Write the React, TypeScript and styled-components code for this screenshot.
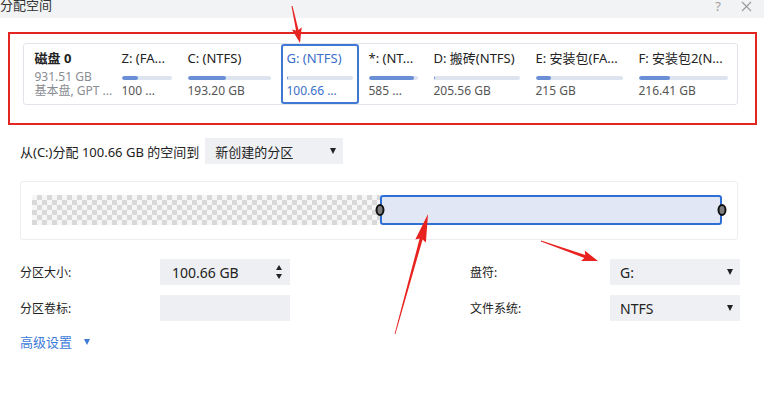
import React from "react";
import styled, { createGlobalStyle } from "styled-components";

const GlobalStyle = createGlobalStyle`
  html, body { margin: 0; padding: 0; background: #fff; }
  body { font-family: "Noto Sans", "Noto Sans CJK SC", sans-serif; color: #222; }
`;

const Window = styled.div`
  position: relative;
  width: 764px;
  height: 400px;
  overflow: hidden;
  background: #fff;
`;

const TitleBar = styled.div`
  height: 18px;
  background: #f2f3f5;
  display: flex;
  align-items: flex-start;
  justify-content: space-between;
`;

const Title = styled.div`
  font-size: 13px;
  line-height: 14px;
  margin-top: -2px;
  color: #333;
`;

const TitleActions = styled.div`
  display: flex;
  align-items: center;
  gap: 20px;
  margin-right: 12px;
  margin-top: 0px;
  color: #a0a0a0;
  font-size: 13px;
  line-height: 13px;
`;

const Highlight = styled.div`
  box-sizing: border-box;
  margin: 14px 0 0 8px;
  width: 749px;
  height: 93px;
  border: 2.5px solid #e3261f;
  padding: 8.5px 0 0 12.5px;
`;

const DiskCard = styled.div`
  box-sizing: border-box;
  width: 715px;
  height: 62px;
  border: 1px solid #e1e4ea;
  border-radius: 3px;
  display: flex;
  gap: 4px;
  padding-left: 11px;
`;

const DiskInfo = styled.div`
  width: 77px;
  padding-top: 6px;
  display: flex;
  flex-direction: column;
`;

const DiskName = styled.div`
  font-size: 13px;
  line-height: 16px;
  font-weight: 700;
  color: #222;
`;

const DiskMeta = styled.div<{ $first?: boolean }>`
  font-size: 12px;
  line-height: 14px;
  color: #8a8d93;
  white-space: nowrap;
  margin-top: ${(p) => (p.$first ? 4 : 0)}px;
`;

const Part = styled.div<{ $sel?: boolean }>`
  box-sizing: border-box;
  height: 100%;
  padding: 4px 4px 0 4px;
  border: 2px solid ${(p) => (p.$sel ? "#3f78d3" : "transparent")};
  border-radius: 3px;
  color: ${(p) => (p.$sel ? "#3a6fc9" : "#222")};
`;

const PartName = styled.div`
  font-size: 13px;
  line-height: 16px;
  white-space: nowrap;
`;

const Bar = styled.div<{ $w: number }>`
  width: ${(p) => p.$w}px;
  height: 4px;
  margin-top: 10px;
  border-radius: 2px;
  background: #dde4f0;
  overflow: hidden;
`;

const Fill = styled.div`
  height: 100%;
  background: #6a8fd6;
  border-radius: 2px;
`;

const PartSize = styled.div<{ $sel?: boolean }>`
  font-size: 12px;
  line-height: 14px;
  margin-top: 4px;
  white-space: nowrap;
  color: ${(p) => (p.$sel ? "#3a6fc9" : "#555")};
`;

const AllocRow = styled.div`
  display: flex;
  align-items: center;
  gap: 6px;
  margin: 13px 0 0 20px;
  font-size: 13px;
  color: #222;
`;

const Select = styled.div<{ $w: number }>`
  box-sizing: border-box;
  width: ${(p) => p.$w}px;
  height: 26px;
  background: #eef0f3;
  display: flex;
  align-items: center;
  justify-content: space-between;
  padding: 0 7px 0 10px;
  font-size: 13px;
  color: #222;
`;

const Caret = styled.span<{ $color?: string }>`
  width: 0;
  height: 0;
  border-left: 3.5px solid transparent;
  border-right: 3.5px solid transparent;
  border-top: 6px solid ${(p) => p.$color || "#222"};
`;

const Panel = styled.div`
  box-sizing: border-box;
  margin: 17px 0 0 20px;
  width: 718px;
  height: 59px;
  border: 1px solid #eceef1;
  border-radius: 3px;
  padding: 13px 15px 0 11px;
`;

const Track = styled.div`
  display: flex;
  height: 30px;
`;

const FreeSpace = styled.div`
  width: 348px;
  background: repeating-conic-gradient(#d9d9d9 0 25%, #f6f6f6 0 50%) 0 0 / 10px 10px;
`;

const SelectedSpace = styled.div`
  position: relative;
  flex: 1;
  box-sizing: border-box;
  border: 2px solid #2e6fd6;
  border-radius: 3px;
  background: #e1e7f4;
`;

const Handle = styled.div<{ $side: "left" | "right" }>`
  position: absolute;
  top: 50%;
  ${(p) => (p.$side === "left" ? "left: -2px;" : "right: -2px;")}
  width: 5px;
  height: 8px;
  border: 2px solid #111;
  border-radius: 50%;
  background: #7f7f7f;
  transform: translate(${(p) => (p.$side === "left" ? "-50%" : "50%")}, -50%);
`;

const Form = styled.div`
  display: grid;
  grid-template-columns: 140px 130px 180px 140px 130px;
  grid-auto-rows: 26px;
  row-gap: 10px;
  align-items: center;
  margin: 19px 0 0 20px;
`;

const Label = styled.div`
  font-size: 12px;
  color: #222;
`;

const Input = styled.div`
  box-sizing: border-box;
  height: 26px;
  background: #edeff2;
  display: flex;
  align-items: center;
  justify-content: space-between;
  padding: 0 8px 0 12px;
  font-size: 14px;
  color: #222;
`;

const Spinner = styled.div`
  display: flex;
  flex-direction: column;
  gap: 4px;
`;

const SpinUp = styled.span`
  width: 0;
  height: 0;
  border-left: 3px solid transparent;
  border-right: 3px solid transparent;
  border-bottom: 5px solid #222;
`;

const SpinDown = styled.span`
  width: 0;
  height: 0;
  border-left: 3px solid transparent;
  border-right: 3px solid transparent;
  border-top: 5px solid #222;
`;

const DropValue = styled.span`
  font-size: 14px;
`;

const Advanced = styled.div`
  display: flex;
  align-items: center;
  gap: 12px;
  margin: 13px 0 0 20px;
  font-size: 13px;
  line-height: 16px;
  color: #3d7bd8;
`;

const Overlay = styled.svg`
  position: absolute;
  left: 0;
  top: 0;
  pointer-events: none;
`;

type P = [number, number];

function arrowPoints(tail: P, tip: P, L: number, hw: number, sw: number, tw: number) {
  const dx = tip[0] - tail[0];
  const dy = tip[1] - tail[1];
  const len = Math.hypot(dx, dy);
  const d: P = [dx / len, dy / len];
  const n: P = [-d[1], d[0]];
  const base: P = [tip[0] - d[0] * L, tip[1] - d[1] * L];
  const pts: P[] = [
    [tail[0] + (n[0] * tw) / 2, tail[1] + (n[1] * tw) / 2],
    [base[0] + (n[0] * sw) / 2, base[1] + (n[1] * sw) / 2],
    [base[0] + n[0] * hw - d[0] * 2, base[1] + n[1] * hw - d[1] * 2],
    tip,
    [base[0] - n[0] * hw - d[0] * 2, base[1] - n[1] * hw - d[1] * 2],
    [base[0] - (n[0] * sw) / 2, base[1] - (n[1] * sw) / 2],
    [tail[0] - (n[0] * tw) / 2, tail[1] - (n[1] * tw) / 2],
  ];
  return pts.map((p) => `${p[0].toFixed(1)},${p[1].toFixed(1)}`).join(" ");
}

const parts = [
  { name: "Z: (FA...", size: "100 ...", w: 50, fill: 32 },
  { name: "C: (NTFS)", size: "193.20 GB", w: 83, fill: 46 },
  { name: "G: (NTFS)", size: "100.66 ...", w: 66, fill: 3, sel: true },
  { name: "*: (NT...", size: "585 ...", w: 49, fill: 92 },
  { name: "D: 搬砖(NTFS)", size: "205.56 GB", w: 86, fill: 2 },
  { name: "E: 安装包(FA...", size: "215 GB", w: 87, fill: 18 },
  { name: "F: 安装包2(N...", size: "216.41 GB", w: 89, fill: 35 },
];

export default function App() {
  return (
    <>
      <GlobalStyle />
      <Window>
        <TitleBar>
          <Title>分配空间</Title>
          <TitleActions>
            <span>?</span>
            <svg width="11" height="11" viewBox="0 0 11 11">
              <path d="M1 1L10 10M10 1L1 10" stroke="#9a9a9a" strokeWidth="1.1" fill="none" />
            </svg>
          </TitleActions>
        </TitleBar>

        <Highlight>
          <DiskCard>
            <DiskInfo>
              <DiskName>磁盘 0</DiskName>
              <DiskMeta $first>931.51 GB</DiskMeta>
              <DiskMeta>基本盘, GPT ...</DiskMeta>
            </DiskInfo>
            {parts.map((p) => (
              <Part key={p.name} $sel={p.sel}>
                <PartName>{p.name}</PartName>
                <Bar $w={p.w}>
                  <Fill style={{ width: `${p.fill}%` }} />
                </Bar>
                <PartSize $sel={p.sel}>{p.size}</PartSize>
              </Part>
            ))}
          </DiskCard>
        </Highlight>

        <AllocRow>
          <span>从(C:)分配 100.66 GB 的空间到</span>
          <Select $w={138}>
            <span>新创建的分区</span>
            <Caret />
          </Select>
        </AllocRow>

        <Panel>
          <Track>
            <FreeSpace />
            <SelectedSpace>
              <Handle $side="left" />
              <Handle $side="right" />
            </SelectedSpace>
          </Track>
        </Panel>

        <Form>
          <Label>分区大小:</Label>
          <Input>
            <span>100.66 GB</span>
            <Spinner>
              <SpinUp />
              <SpinDown />
            </Spinner>
          </Input>
          <span />
          <Label>盘符:</Label>
          <Select $w={130}>
            <DropValue>G:</DropValue>
            <Caret />
          </Select>

          <Label>分区卷标:</Label>
          <Input />
          <span />
          <Label>文件系统:</Label>
          <Select $w={130}>
            <DropValue>NTFS</DropValue>
            <Caret />
          </Select>
        </Form>

        <Advanced>
          <span>高级设置</span>
          <Caret $color="#3d7bd8" />
        </Advanced>

        <Overlay width="764" height="400" viewBox="0 0 764 400">
          <polygon points={arrowPoints([292, 6], [300, 43], 13, 5, 2.6, 1)} fill="#e8231f" />
          <polygon points={arrowPoints([395, 334], [428, 214], 26, 5.5, 3.2, 0.8)} fill="#e8231f" />
          <polygon points={arrowPoints([541, 241], [598, 261], 14, 5.5, 3.2, 0.8)} fill="#e8231f" />
        </Overlay>
      </Window>
    </>
  );
}
